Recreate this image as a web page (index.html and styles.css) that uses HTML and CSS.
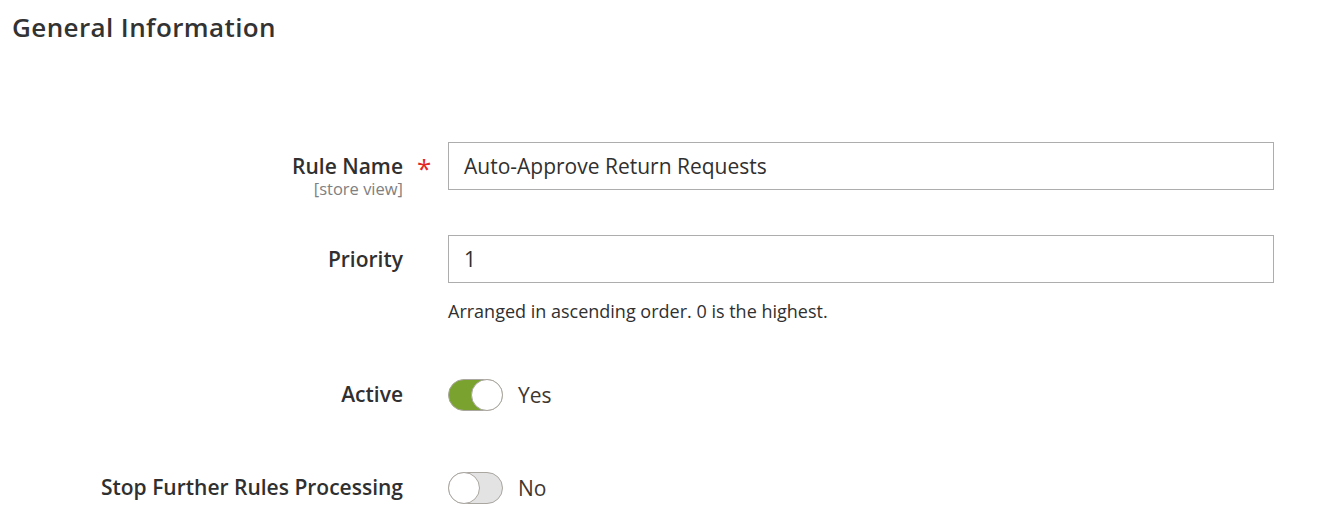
FILE: index.html
```html
<!DOCTYPE html>
<html>
<head>
<meta charset="utf-8">
<link rel="stylesheet" href="styles.css">
</head>
<body>
<div class="page">
  <h2 class="section-title">General Information</h2>
  <div class="form">
    <div class="field">
      <div class="label-col">
        <div class="label">Rule Name</div>
        <div class="scope">[store view]</div>
      </div>
      <div class="req-col"><span class="req">*</span></div>
      <div class="control">
        <div class="input">Auto-Approve Return Requests</div>
      </div>
    </div>
    <div class="field field-priority">
      <div class="label-col">
        <div class="label">Priority</div>
      </div>
      <div class="req-col"></div>
      <div class="control">
        <div class="input">1</div>
        <div class="note">Arranged in ascending order. 0 is the highest.</div>
      </div>
    </div>
    <div class="field field-toggle field-active">
      <div class="label-col">
        <div class="label">Active</div>
      </div>
      <div class="req-col"></div>
      <div class="control toggle-control">
        <span class="toggle on"><span class="knob"></span></span>
        <span class="toggle-text">Yes</span>
      </div>
    </div>
    <div class="field field-toggle field-stop">
      <div class="label-col">
        <div class="label">Stop Further Rules Processing</div>
      </div>
      <div class="req-col"></div>
      <div class="control toggle-control">
        <span class="toggle off"><span class="knob"></span></span>
        <span class="toggle-text">No</span>
      </div>
    </div>
  </div>
</div>
</body>
</html>
```

FILE: styles.css
```css
html, body {
  margin: 0;
  padding: 0;
  background: #ffffff;
}
body {
  font-family: "Open Sans", "Liberation Sans", sans-serif;
  color: #303030;
  width: 1329px;
  height: 516px;
  overflow: hidden;
}
.page {
  padding: 0 0 0 12px;
}
.section-title {
  margin: 0;
  padding-top: 10px;
  font-size: 26px;
  font-weight: 600;
  line-height: 34px;
  letter-spacing: 0.4px;
  color: #333333;
}
.form {
  padding-top: 98px;
  display: flex;
  flex-direction: column;
}
.field {
  display: flex;
  align-items: flex-start;
}
.label-col {
  width: 391px;
  text-align: right;
  padding-top: 10px;
}
.label {
  font-size: 21px;
  font-weight: 600;
  line-height: 29px;
  color: #303030;
}
.scope {
  font-size: 16.5px;
  line-height: 16px;
  color: #808080;
}
.req-col {
  width: 45px;
  padding-top: 10px;
  padding-left: 14px;
  box-sizing: border-box;
}
.req {
  color: #e22626;
  font-size: 26px;
  line-height: 32px;
}
.control {
  width: 826px;
}
.input {
  box-sizing: border-box;
  height: 48px;
  border: 1px solid #adadad;
  padding: 0 15px;
  font-size: 21px;
  line-height: 46px;
  color: #303030;
}
.field-priority {
  margin-top: 38px;
}
.note {
  margin-top: 16px;
  font-size: 18px;
  line-height: 24px;
  color: #303030;
}
.field-toggle .label-col {
  padding-top: 1px;
}
.field-active {
  margin-top: 56px;
}
.field-stop {
  margin-top: 61px;
}
.toggle-control {
  display: flex;
  align-items: center;
  height: 32px;
}
.toggle {
  position: relative;
  box-sizing: border-box;
  width: 55px;
  height: 32px;
  border-radius: 16px;
  border: 1px solid #aaa6a0;
  display: inline-block;
}
.toggle.on {
  background: #79a22e;
}
.toggle.off {
  background: #e3e3e3;
}
.knob {
  position: absolute;
  top: -1px;
  width: 32px;
  height: 32px;
  box-sizing: border-box;
  border-radius: 50%;
  background: #ffffff;
  border: 1px solid #aaa6a0;
}
.toggle.on .knob {
  right: -1px;
}
.toggle.off .knob {
  left: -1px;
}
.toggle-text {
  margin-left: 15px;
  font-size: 21px;
  line-height: 28px;
  color: #41362f;
}
```
